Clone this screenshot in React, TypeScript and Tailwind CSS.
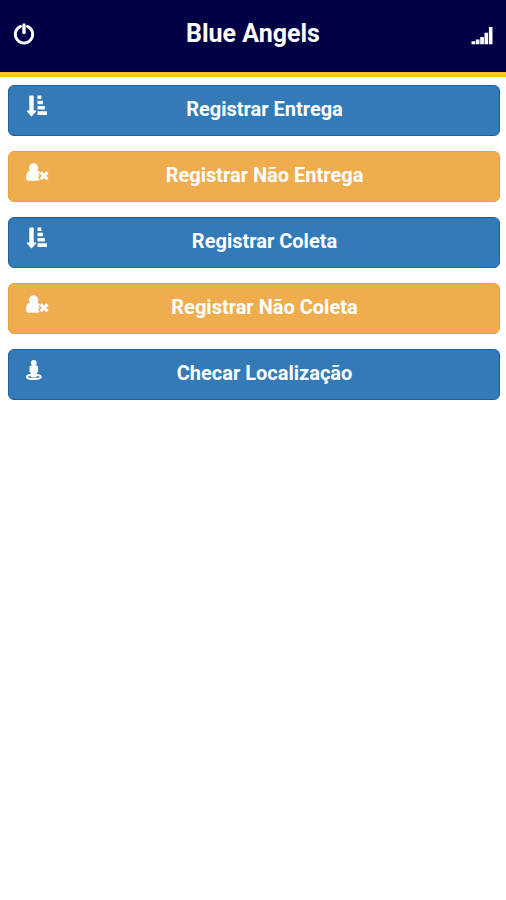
import type { ReactNode } from "react";

function PowerIcon() {
  return (
    <svg viewBox="0 0 24 24" className="size-6" fill="none" stroke="currentColor" aria-hidden="true">
      <path d="M8.600 4.400a8.700 8.700 0 1 0 6.800 0" strokeWidth="2.900" strokeLinecap="round" />
      <path d="M12 3v7.500" strokeWidth="3.400" strokeLinecap="round" />
    </svg>
  );
}

function SignalIcon() {
  return (
    <svg viewBox="0 0 24 24" className="size-6" fill="currentColor" aria-hidden="true">
      <path d="M1.500 17.200h3.700v3.100H1.500zM5.800 15.500h3.700v4.800H5.800zM10.200 13h3.700v7.300h-3.700zM14.500 8.700h3.600v11.600h-3.600zM18.900 3h3.600v17.300h-3.600z" />
    </svg>
  );
}

function SortIcon() {
  return (
    <svg viewBox="0 0 24 24" className="size-6" fill="currentColor" aria-hidden="true">
      <path d="M3.300 2q0-.6.6-.6h3.200q.6 0 .6.600V16.500h2q1 .1.300.9l-3.900 4.500q-.6.600-1.200 0L1 17.400q-.7-.8.300-.9h2z" />
      <path d="M11.500 1.600h3.800v3.500h-3.800zM11.500 6.800h5.400v3.500h-5.400zM11.500 12h7.300v3.500h-7.300zM11.500 17.300h9.400v3.700h-9.400z" />
    </svg>
  );
}

function UserTimesIcon() {
  return (
    <svg viewBox="0 0 24 24" className="size-6" fill="currentColor" aria-hidden="true">
      <circle cx="7.600" cy="8" r="4.700" />
      <path d="M3.800 10.800q3.800 2.800 7.600 0 1.700.2 2.600 1.800l-1 1.100q-.5.700 0 1.300l.7.700-1.200 1.400q-.6.900.2 1.700l1 1q-.6.900-2 .9H3Q0 20.700 0 17.800q.1-6.300 3.800-7z" />
      <path d="M14.700 12.400l6.800 6.800M21.500 12.400l-6.800 6.800" fill="none" stroke="currentColor" strokeWidth="3" />
    </svg>
  );
}

function StreetViewIcon() {
  return (
    <svg viewBox="0 0 24 24" className="size-6" fill="currentColor" aria-hidden="true">
      <circle cx="7.800" cy="5" r="2.900" />
      <path d="M5.300 7.400h5q1.800 0 1.800 1.800v4.300q0 1.100-1.200 1.300v3.800q0 .8-.9.800H5.600q-.9 0-.9-.8v-3.800q-1.200-.2-1.200-1.300V9.200q0-1.800 1.800-1.800z" />
      <path
        d="M4.200 16.900c-2.200.4-3.400 1.100-3.400 1.900 0 1.300 3.100 2.200 7 2.200s7-.9 7-2.200c0-.8-1.200-1.500-3.400-1.900"
        fill="none"
        stroke="currentColor"
        strokeWidth="2"
        strokeLinecap="round"
      />
    </svg>
  );
}

const variants = {
  primary: "border-[#1c62a0] bg-[#337ab7]",
  warning: "border-[#e8a42e] bg-[#f0ad4e]",
};

interface ActionProps {
  variant: keyof typeof variants;
  icon: ReactNode;
  children: ReactNode;
}

function ActionButton({ variant, icon, children }: ActionProps) {
  return (
    <button
      type="button"
      className={`grid h-[51px] w-full grid-cols-[24px_1fr] items-start rounded-md border pt-2 pr-5 pl-[17px] text-xl leading-[30px] font-bold text-white ${variants[variant]}`}
    >
      {icon}
      <span>{children}</span>
    </button>
  );
}

export default function App() {
  return (
    <div className="min-h-screen bg-white font-['Roboto',sans-serif]">
      <header className="flex items-start justify-between border-b-[5px] border-[#fbc618] bg-[#000045] px-3 pt-4 pb-5 text-white">
        <button type="button" aria-label="Sair" className="pt-1.5">
          <PowerIcon />
        </button>
        <h1 className="text-[25px] leading-9 font-bold">Blue Angels</h1>
        <button type="button" aria-label="Sinal" className="pt-2">
          <SignalIcon />
        </button>
      </header>
      <main className="flex flex-col gap-[15px] py-2 pr-1.5 pl-2">
        <ActionButton variant="primary" icon={<SortIcon />}>Registrar Entrega</ActionButton>
        <ActionButton variant="warning" icon={<UserTimesIcon />}>Registrar Não Entrega</ActionButton>
        <ActionButton variant="primary" icon={<SortIcon />}>Registrar Coleta</ActionButton>
        <ActionButton variant="warning" icon={<UserTimesIcon />}>Registrar Não Coleta</ActionButton>
        <ActionButton variant="primary" icon={<StreetViewIcon />}>Checar Localização</ActionButton>
      </main>
    </div>
  );
}
